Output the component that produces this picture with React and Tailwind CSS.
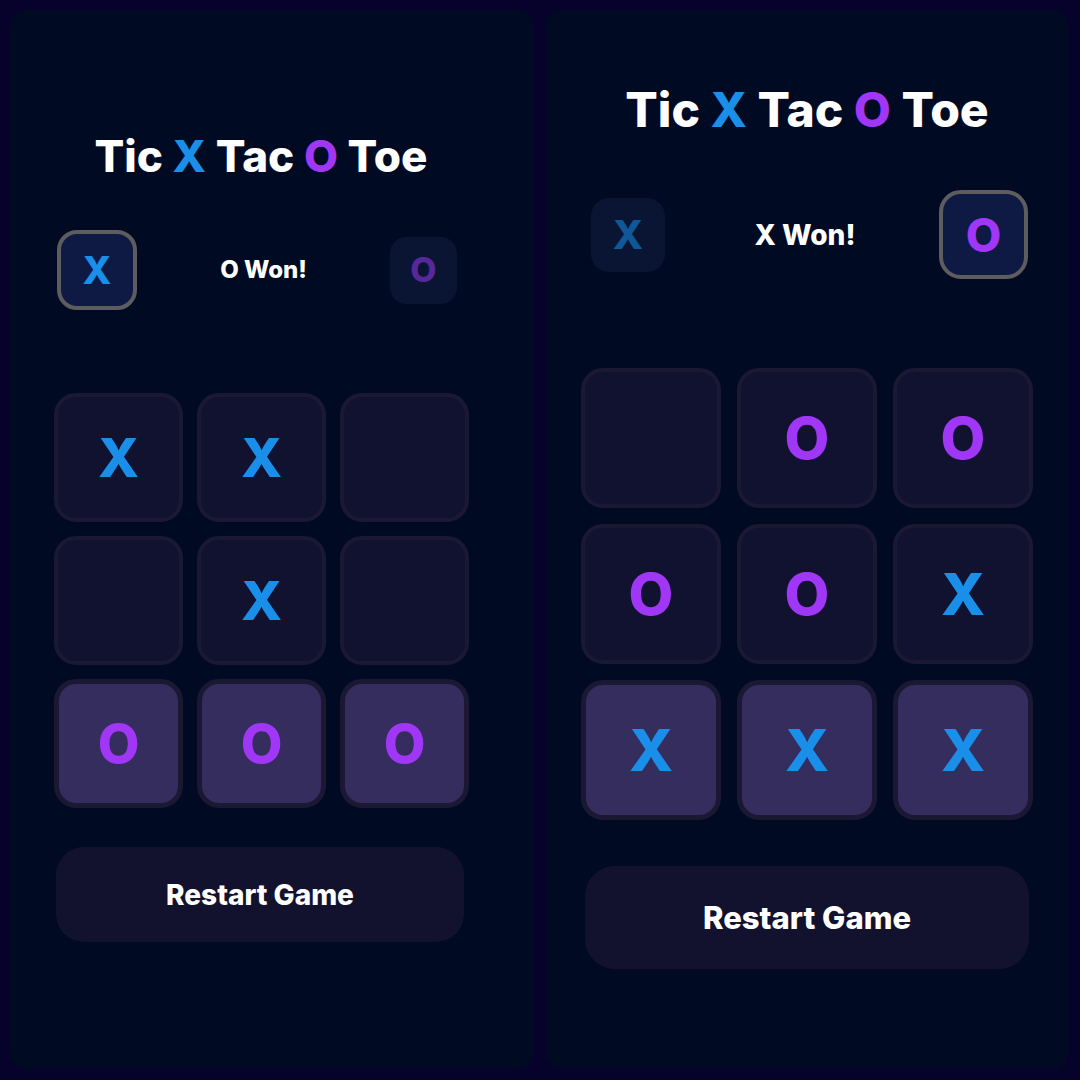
import React from "react";

const F = "[font-family:Inter,'Noto_Sans',sans-serif]";

function Title({ size }) {
  return (
    <h1 className={`${size} font-extrabold text-white leading-none text-center whitespace-nowrap`}>
      Tic <span className="text-[#1a8fea]">X</span> Tac <span className="text-[#a036f6]">O</span> Toe
    </h1>
  );
}

function Cell({ v, win, size, glyph }) {
  return (
    <div
      className={`${size} rounded-[22px] border-[4px] border-[#1b1834] flex items-center justify-center font-extrabold leading-none ${glyph} ${
        win ? "bg-[#342d5e] border-[5px]" : "bg-[#10122f]"
      } ${v === "X" ? "text-[#1a8fea]" : "text-[#a036f6]"}`}
    >
      {v}
    </div>
  );
}

function LeftPanel() {
  const board = ["X", "X", "", "", "X", "", "O", "O", "O"];
  const wins = [6, 7, 8];
  return (
    <div className="w-[524px] h-[1059px] rounded-[16px] bg-[#000a23] flex flex-col pl-[44px]">
      <div className="w-[414px] mt-[124px]">
        <Title size="text-[44px]" />
      </div>
      <div className="w-[414px] h-[80px] mt-[52px] flex items-center justify-between pl-[3px] pr-[11px]">
        <div className="w-[80px] h-[80px] rounded-[20px] border-[4px] border-[#5d5c5f] bg-[#0f1a44] flex items-center justify-center text-[38px] font-extrabold text-[#1a8fea] leading-none">
          X
        </div>
        <div className="text-[24px] font-extrabold text-white leading-none">O Won!</div>
        <div className="w-[67px] h-[67px] rounded-[16px] bg-[#0a1433] flex items-center justify-center text-[34px] font-extrabold text-[#57289a] leading-none">
          O
        </div>
      </div>
      <div className="w-[415px] mt-[83px] grid grid-cols-[repeat(3,129px)] gap-[14px]">
        {board.map((v, i) => (
          <Cell key={i} v={v} win={wins.includes(i)} size="w-[129px] h-[129px]" glyph="text-[54px]" />
        ))}
      </div>
      <div className="w-[408px] ml-[2px] h-[95px] mt-[39px] rounded-[28px] bg-[#12122f] flex items-center justify-center text-[28px] font-extrabold text-white leading-none">
        Restart Game
      </div>
    </div>
  );
}

function RightPanel() {
  const board = ["", "O", "O", "O", "O", "X", "X", "X", "X"];
  const wins = [6, 7, 8];
  return (
    <div className="w-[524px] h-[1059px] rounded-[16px] bg-[#000a23] flex flex-col items-center">
      <div className="mt-[76px]">
        <Title size="text-[48px]" />
      </div>
      <div className="w-[452px] h-[89px] mt-[56px] flex items-center justify-between pl-[10px] pr-[5px]">
        <div className="w-[74px] h-[74px] rounded-[18px] bg-[#0a1433] flex items-center justify-center text-[40px] font-extrabold text-[#0f5796] leading-none">
          X
        </div>
        <div className="text-[28px] font-extrabold text-white leading-none pl-[6px]">X Won!</div>
        <div className="w-[89px] h-[89px] rounded-[22px] border-[4px] border-[#5d5c5f] bg-[#0f1a44] flex items-center justify-center text-[46px] font-extrabold text-[#a036f6] leading-none">
          O
        </div>
      </div>
      <div className="w-[452px] mt-[89px] grid grid-cols-[repeat(3,140px)] gap-[16px]">
        {board.map((v, i) => (
          <Cell key={i} v={v} win={wins.includes(i)} size="w-[140px] h-[140px]" glyph="text-[58px]" />
        ))}
      </div>
      <div className="w-[444px] h-[103px] mt-[46px] rounded-[30px] bg-[#12122f] flex items-center justify-center text-[31px] font-extrabold text-white leading-none">
        Restart Game
      </div>
    </div>
  );
}

export default function App() {
  return (
    <div className={`w-[1080px] h-[1080px] bg-[#06022b] p-[10px] flex gap-[11px] ${F}`}>
      <LeftPanel />
      <RightPanel />
    </div>
  );
}
